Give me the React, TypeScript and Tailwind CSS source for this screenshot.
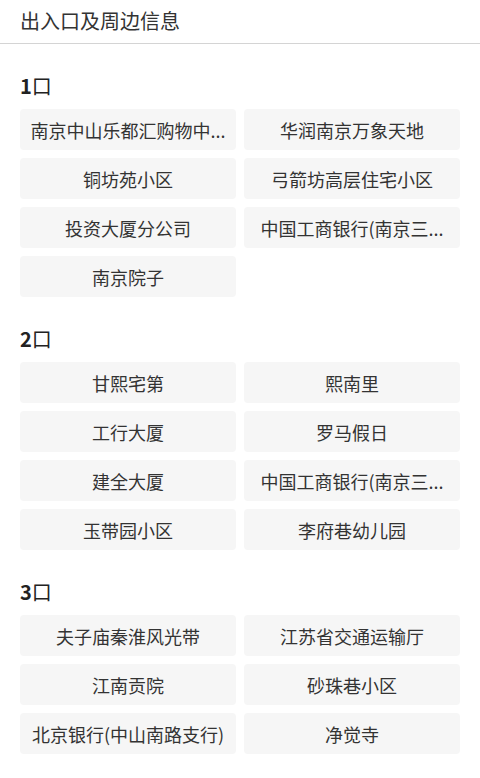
import React from "react";

const sections: { no: string; places: string[] }[] = [
  {
    no: "1",
    places: [
      "南京中山乐都汇购物中...",
      "华润南京万象天地",
      "铜坊苑小区",
      "弓箭坊高层住宅小区",
      "投资大厦分公司",
      "中国工商银行(南京三...",
      "南京院子",
    ],
  },
  {
    no: "2",
    places: [
      "甘熙宅第",
      "熙南里",
      "工行大厦",
      "罗马假日",
      "建全大厦",
      "中国工商银行(南京三...",
      "玉带园小区",
      "李府巷幼儿园",
    ],
  },
  {
    no: "3",
    places: [
      "夫子庙秦淮风光带",
      "江苏省交通运输厅",
      "江南贡院",
      "砂珠巷小区",
      "北京银行(中山南路支行)",
      "净觉寺",
    ],
  },
];

export default function App() {
  return (
    <div
      className="w-[480px] min-h-[778px] bg-white text-[#333333]"
      style={{ fontFamily: '"Noto Sans CJK SC", "Noto Sans", sans-serif' }}
    >
      <header className="h-[44px] flex items-center px-5 border-b border-[#d4d4d4]">
        <h1 className="text-[20px] leading-none text-[#333333] -mt-[2px]">出入口及周边信息</h1>
      </header>
      <main className="px-5">
        {sections.map((s) => (
          <section key={s.no} className="pt-[28px]">
            <h2 className="h-7 flex items-center mb-[9px] text-[20px] text-[#222222]">
              <span className="font-bold">{s.no}</span>
              <span className="font-normal">口</span>
            </h2>
            <div className="grid grid-cols-2 gap-x-2 gap-y-2">
              {s.places.map((p, i) => (
                <div
                  key={i}
                  className="h-[41px] rounded-[4px] bg-[#f6f6f6] px-1 flex items-center justify-center"
                >
                  <span className="whitespace-nowrap text-[18px] leading-none text-[#333333]">{p}</span>
                </div>
              ))}
            </div>
          </section>
        ))}
      </main>
    </div>
  );
}
